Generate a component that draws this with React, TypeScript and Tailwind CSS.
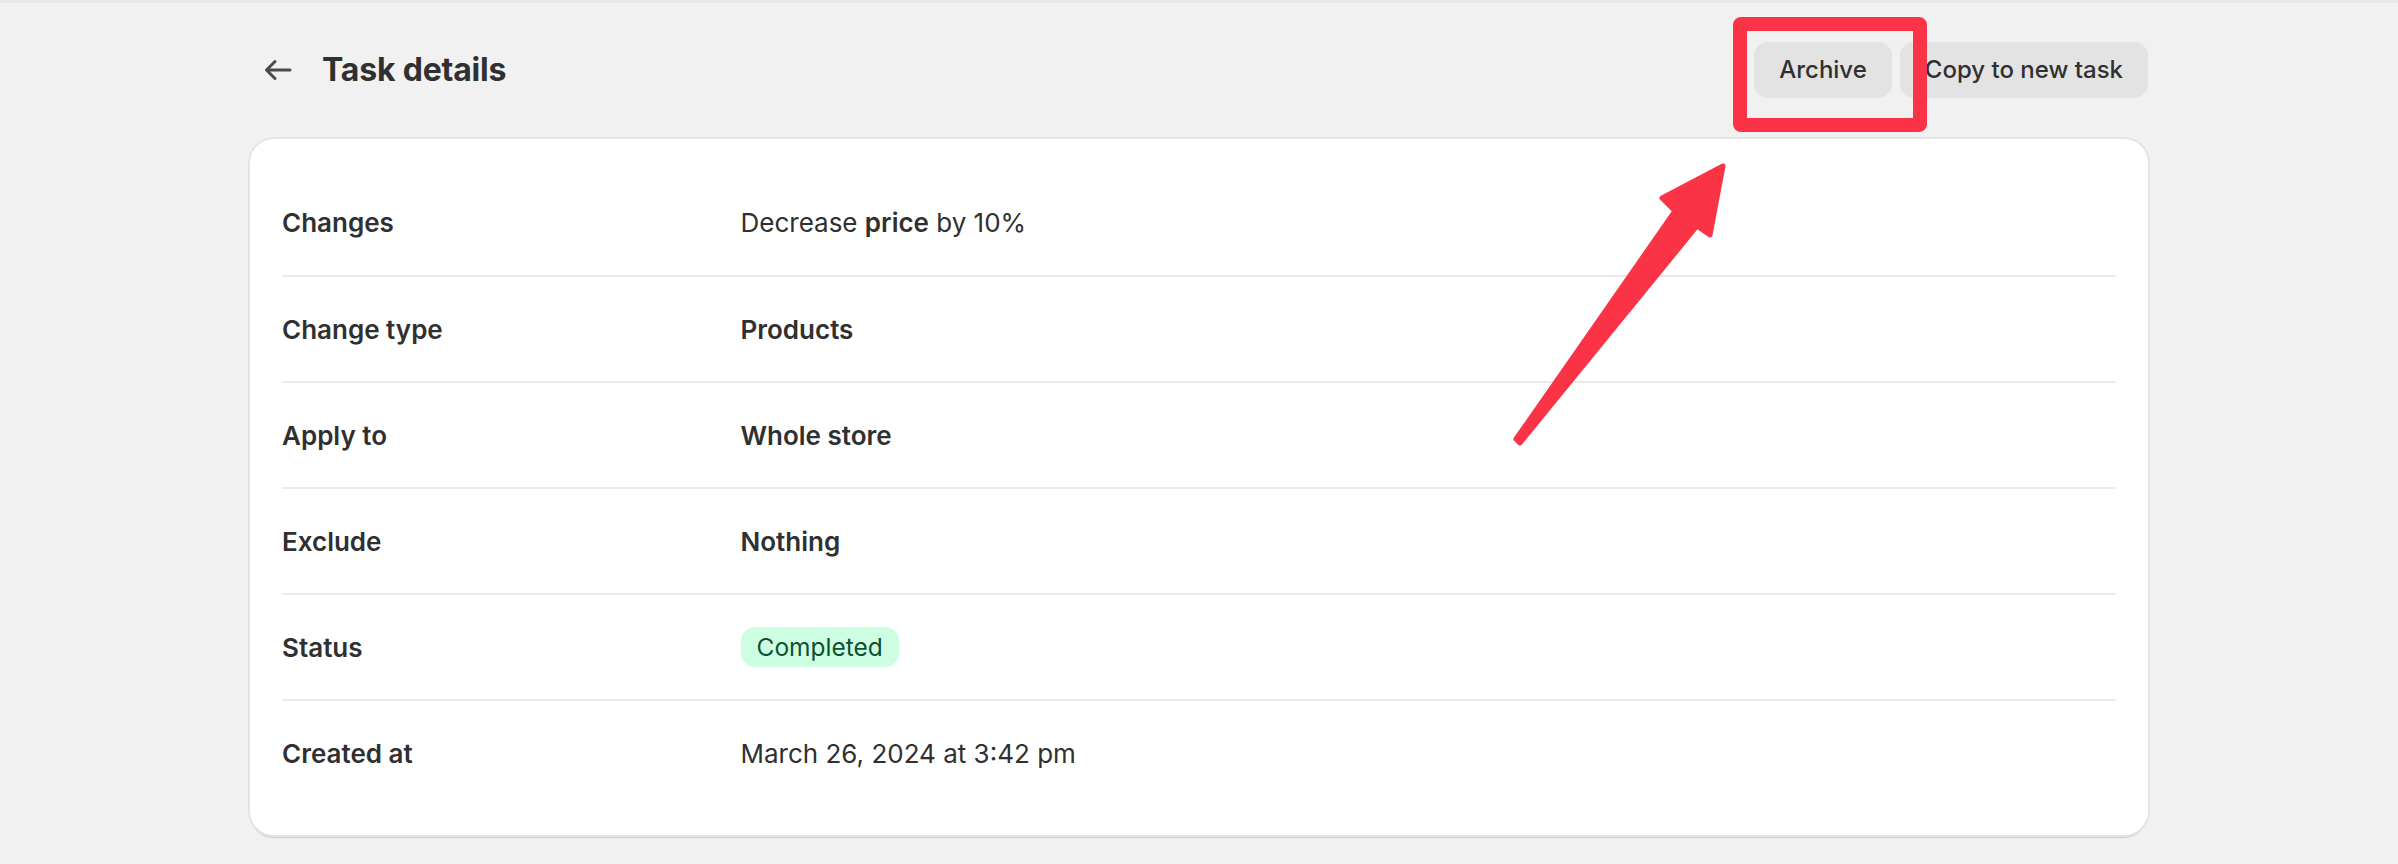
import type { ReactNode } from 'react';

const rows: { label: string; value: ReactNode }[] = [
  {
    label: 'Changes',
    value: (
      <span className="font-normal">
        Decrease <span className="font-semibold">price</span> by 10%
      </span>
    ),
  },
  { label: 'Change type', value: <span className="font-semibold">Products</span> },
  { label: 'Apply to', value: <span className="font-semibold">Whole store</span> },
  { label: 'Exclude', value: <span className="font-semibold">Nothing</span> },
  {
    label: 'Status',
    value: (
      <span className="inline-flex h-[40px] items-center rounded-[14px] bg-[#cdfee1] px-[16px] text-[24.5px] font-normal text-[#0c5132]">
        Completed
      </span>
    ),
  },
  { label: 'Created at', value: <span className="font-normal">March 26, 2024 at 3:42 pm</span> },
];

function BackArrow() {
  return (
    <svg width="28" height="22" viewBox="0 0 28 22" fill="none" aria-hidden="true">
      <path
        d="M26 11H3M11 2.5 2.5 11l8.5 8.5"
        stroke="#4a4a4a"
        strokeWidth="3"
        strokeLinecap="round"
        strokeLinejoin="round"
      />
    </svg>
  );
}

export default function App() {
  return (
    <div
      className="relative h-[864px] w-full overflow-hidden border-t-[3px] border-[#e9e9e9] bg-[#f1f1f1] text-[#303030]"
      style={{ fontFamily: 'Inter, "Noto Sans", sans-serif' }}
    >
      <div className="mx-auto w-[1898px]">
        <header className="mt-[39px] flex h-[56px] items-center justify-between">
          <div className="flex items-center gap-[30px] pl-[14px]">
            <BackArrow />
            <h1 className="text-[32px] font-bold tracking-[-0.2px]">Task details</h1>
          </div>
          <div className="flex items-center gap-[8px]">
            <button className="h-[56px] rounded-[14px] bg-[#e3e3e3] px-[25px] text-[24px] font-medium text-[#303030]">
              Archive
            </button>
            <button className="h-[56px] rounded-[14px] bg-[#e3e3e3] px-[25px] text-[24px] font-medium text-[#303030]">
              Copy to new task
            </button>
          </div>
        </header>

        <section className="mt-[41px] rounded-[24px] bg-white px-[32px] py-[30px] shadow-[0_0_0_2px_#e4e4e4,0_3px_1px_0_#cdcdcd]">
          {rows.map((row, i) => (
            <div
              key={row.label}
              className={`grid h-[106px] grid-cols-[1fr_3fr] items-center text-[26px] ${
                i > 0 ? 'border-t-2 border-[#ebebeb]' : ''
              }`}
            >
              <div className="font-semibold">{row.label}</div>
              <div>{row.value}</div>
            </div>
          ))}
        </section>
      </div>

      {/* annotation */}
      <div className="absolute left-[1733px] top-[14px] h-[115px] w-[194px] rounded-[8px] border-[14px] border-[#fa3446]" />
      <svg className="absolute left-0 top-0" width="2398" height="864" aria-hidden="true">
        <polygon
          points="1516,436 1675,208 1662,195 1723,163 1710,232 1697,223 1520,440"
          fill="#fa3446"
          stroke="#fa3446"
          strokeWidth="5"
          strokeLinejoin="round"
        />
      </svg>
    </div>
  );
}
